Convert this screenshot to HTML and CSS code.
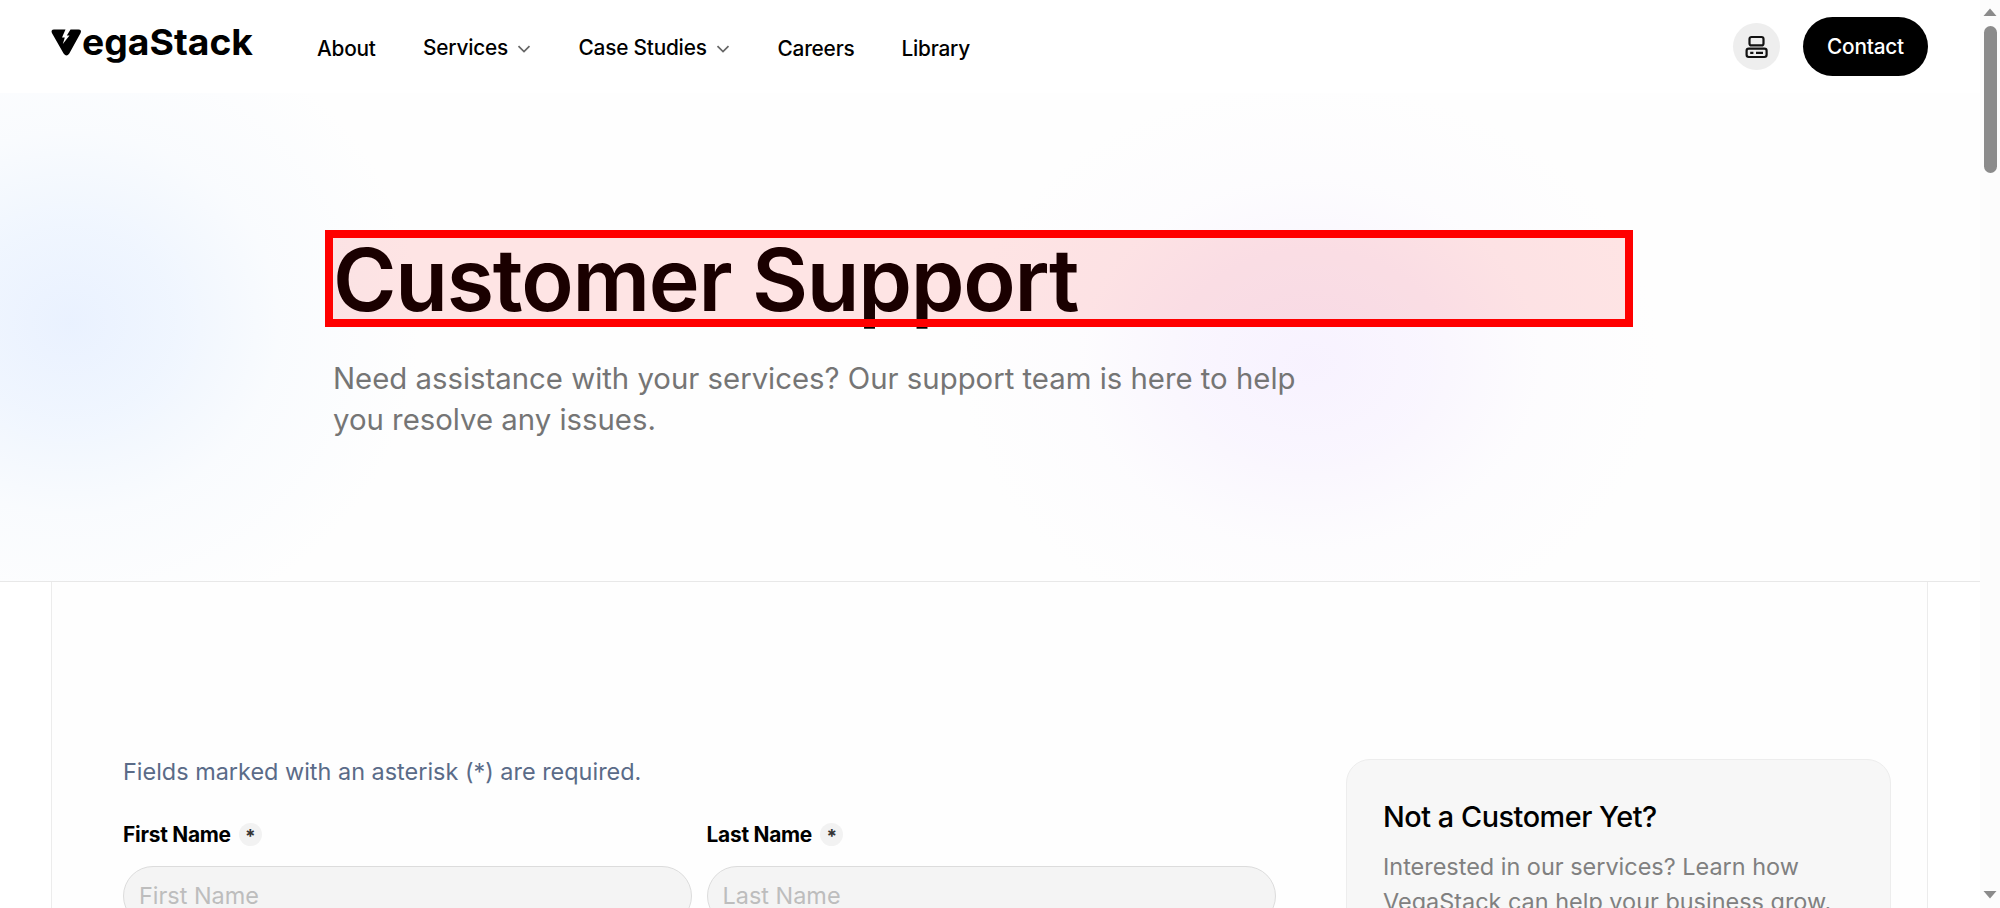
FILE: index.html
```html
<!DOCTYPE html>
<html lang="en">
<head>
<meta charset="utf-8">
<title>Customer Support - VegaStack</title>
<link rel="stylesheet" href="styles.css">
</head>
<body>
<div class="page">
  <div class="content">
    <header class="header">
      <a class="logo" aria-label="VegaStack">
        <svg class="logo-svg" width="204" height="44" viewBox="0 0 204 44">
          <path d="M3 0.5H14.5L11 8.5H13.8L11.8 15L18.5 6.5H15.8L19.5 0.5H27.5Q31 0.7 29.6 4L18.3 24.5Q15.5 28.5 12.6 24.5L0.9 4Q-0.4 0.8 3 0.5Z"/>
          <text class="logo-text" x="31" y="26" textLength="171" lengthAdjust="spacingAndGlyphs">egaStack</text>
        </svg>
      </a>
      <nav class="nav">
        <a class="nav-link about">About</a>
        <a class="nav-link raised services">Services<svg class="chev" width="14" height="8" viewBox="0 0 14 8"><path d="M1.5 1.2L7 6.6L12.5 1.2"/></svg></a>
        <a class="nav-link raised cases">Case Studies<svg class="chev" width="14" height="8" viewBox="0 0 14 8"><path d="M1.5 1.2L7 6.6L12.5 1.2"/></svg></a>
        <a class="nav-link careers">Careers</a>
        <a class="nav-link library">Library</a>
      </nav>
      <div class="actions">
        <span class="theme">
          <svg width="24" height="24" viewBox="0 0 24 24"><rect x="4.5" y="2" width="14" height="8.4" rx="2"/><rect x="1.6" y="13.6" width="20" height="8.4" rx="2.2"/><path d="M5.2 17.8H8.4M11 17.8H18"/></svg>
        </span>
        <a class="contact">Contact</a>
      </div>
    </header>
    <section class="hero">
      <div class="title-wrap">
        <h1 class="title">Customer Support</h1>
        <div class="highlight"></div>
      </div>
      <p class="subtitle">Need assistance with your services? Our support team is here to help<br>you resolve any issues.</p>
    </section>
    <main class="main">
      <form class="form">
        <p class="note">Fields marked with an asterisk (*) are required.</p>
        <div class="fields">
          <div class="field">
            <label class="label">First Name<span class="star">*</span></label>
            <div class="input">First Name</div>
          </div>
          <div class="field">
            <label class="label">Last Name<span class="star">*</span></label>
            <div class="input">Last Name</div>
          </div>
        </div>
      </form>
      <aside class="card">
        <h2 class="card-title">Not a Customer Yet?</h2>
        <p class="card-text">Interested in our services? Learn how<br>VegaStack can help your business grow.</p>
      </aside>
    </main>
  </div>
  <div class="scrollbar">
    <svg class="arrow" width="14" height="8" viewBox="0 0 14 8"><path d="M0.5 8L7 0.5L13.5 8Z"/></svg>
    <div class="thumb"></div>
    <svg class="arrow down" width="14" height="8" viewBox="0 0 14 8"><path d="M0.5 0L7 7.5L13.5 0Z"/></svg>
  </div>
</div>
</body>
</html>
```
FILE: styles.css
```css
* { box-sizing: border-box; }
body { margin: 0; overflow: hidden; background: #fff; color: #000; font-family: Inter, "Liberation Sans", sans-serif; }
h1, h2, p { margin: 0; }
.page { display: flex; width: 2000px; height: 908px; overflow: hidden; }
.content { width: 1980px; height: 908px; overflow: hidden; display: flex; flex-direction: column; }

.header { height: 93px; flex: none; display: flex; padding: 0 52px 0 51px; background: #fff; }
.logo { width: 266px; padding-top: 29px; }
.logo-svg { display: block; overflow: visible; }
.logo-text { font-size: 36px; font-weight: 650; }
.nav { display: flex; padding-top: 35px; }
.nav-link { display: flex; align-items: center; height: 26px; font-size: 20.8px; font-weight: 500; letter-spacing: -0.2px; white-space: nowrap; }
.raised { margin-top: -1px; }
.about { width: 106px; }
.services { width: 155.5px; }
.cases { width: 199px; }
.careers { width: 124px; }
.chev { margin: 3px 0 0 9px; fill: none; stroke: #666; stroke-width: 1.7; }
.actions { margin-left: auto; display: flex; align-items: center; gap: 23px; }
.theme { width: 47px; height: 47px; border-radius: 50%; background: #eee; display: flex; align-items: center; justify-content: center; }
.theme svg { fill: none; stroke: #111; stroke-width: 2.2; }
.contact { width: 125px; height: 59px; border-radius: 30px; background: #000; color: #fff; font-size: 20.8px; font-weight: 500; letter-spacing: -0.2px; display: flex; align-items: center; justify-content: center; }

.hero {
  height: 489px; flex: none; padding: 137px 0 0 325px; border-bottom: 1px solid #e8e8e8;
  background:
    radial-gradient(ellipse 350px 320px at 70px 230px, rgba(225,236,255,.7) 0, rgba(228,239,255,.55) 30%, rgba(240,246,255,.35) 60%, rgba(253,253,255,0) 100%),
    radial-gradient(ellipse 350px 280px at 1310px 270px, rgba(243,234,255,.6) 0, rgba(245,238,255,.5) 35%, rgba(250,247,255,.3) 65%, rgba(253,253,253,0) 100%),
    #fefefe;
}
.title-wrap { position: relative; width: 1308px; height: 97px; padding-left: 8px; }
.title { font-size: 86.2px; line-height: 99px; font-weight: 600; letter-spacing: -1.25px; white-space: nowrap; }
.highlight { position: absolute; inset: 0; border: 8.5px solid #f00; background: rgba(255,0,0,.1); }
.subtitle { margin-top: 31px; padding-left: 8px; font-size: 29.33px; line-height: 41px; color: #757575; white-space: nowrap; }

.main { flex: 1; margin: 0 52px 0 51px; border: solid #ececec; border-width: 0 1px; background: #fefefe; display: flex; justify-content: space-between; padding: 177px 36px 0 71px; }
.form { width: 1153px; }
.note { margin-top: -3px; font-size: 23.45px; line-height: 32px; color: #5a6b88; white-space: nowrap; }
.fields { display: flex; gap: 14.5px; margin-top: 32px; }
.field { width: 569px; }
.label { display: flex; align-items: center; gap: 8px; height: 28px; font-size: 20.9px; font-weight: 650; letter-spacing: -0.25px; }
.star { width: 23px; height: 23px; border-radius: 50%; background: #f2f2f2; color: #333; font-size: 19px; line-height: 27px; text-align: center; }
.input { margin-top: 18px; height: 60px; border: 1.4px solid #dcdcdc; border-radius: 30px; background: #f4f4f4; padding: 0 15px; font-size: 23.45px; line-height: 58px; color: #bdbdbd; }
.card { width: 545px; height: 320px; border: 1.4px solid #ededed; border-radius: 24px; background: #f7f7f7; padding: 38px 36px; }
.card-title { font-size: 28.8px; line-height: 37px; font-weight: 500; letter-spacing: -0.45px; white-space: nowrap; }
.card-text { margin-top: 14px; font-size: 23.45px; line-height: 35px; color: #808080; white-space: nowrap; }

.scrollbar { width: 20px; background: #fcfcfc; display: flex; flex-direction: column; align-items: center; padding: 8px 0 9px; }
.arrow { display: block; fill: #8b8b8b; flex: none; }
.thumb { width: 13px; height: 147px; margin-top: 10px; border-radius: 7px; background: #8b8b8b; }
.down { margin-top: auto; }
```
